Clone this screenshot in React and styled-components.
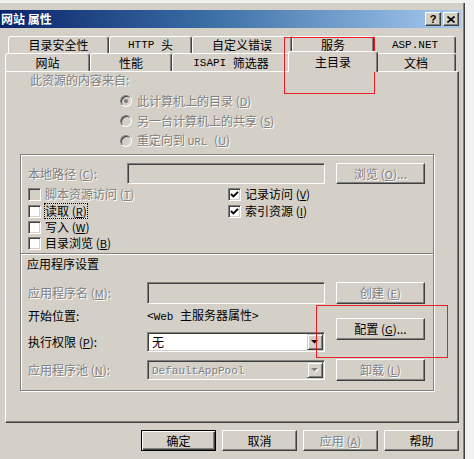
import React from 'react';
import styled, { createGlobalStyle } from 'styled-components';

const GlobalStyle = createGlobalStyle`
  html, body { margin: 0; padding: 0; background: #f1f1f1; }
  body {
    font-family: "Noto Sans CJK SC", "Noto Sans", sans-serif;
    font-size: 12px;
    color: #000;
  }
  #root { width: 474px; height: 459px; overflow: hidden; }
`;

const Page = styled.div`
  position: relative;
  box-sizing: border-box;
  width: 474px;
  height: 459px;
  padding-top: 3px;
  overflow: hidden;
  background: #f1f1f1;
`;

const Dialog = styled.div`
  box-sizing: border-box;
  width: 465px;
  height: 460px;
  background: #d4d0c8;
  border-right: 1px solid #404040;
  box-shadow: inset -1px 0 #808080;
  padding: 7px 3px 0 0;
`;

const TitleBar = styled.div`
  display: flex;
  align-items: center;
  height: 18px;
  padding-left: 1px;
  background: linear-gradient(to right, #0a246a 0%, #3a6ea5 45%, #a6caf0 100%);
  color: #fff;
  font-weight: bold;
  font-size: 12px;
  line-height: 14px;
  white-space: pre;
`;

const CaptionButtons = styled.div`
  display: flex;
  gap: 2px;
  margin-left: auto;
  padding-right: 2px;
`;

const CaptionButton = styled.div`
  box-sizing: border-box;
  width: 16px;
  height: 14px;
  background: #d4d0c8;
  border: 1px solid;
  border-color: #fff #404040 #404040 #fff;
  box-shadow: inset -1px -1px #808080;
  display: flex;
  align-items: center;
  justify-content: center;
  color: #000;
  font-family: "Liberation Sans", sans-serif;
  font-weight: bold;
  font-size: 11px;
  line-height: 10px;
`;

const Body = styled.div`
  padding: 8px 0 0 5px;
`;

const TabRow = styled.div`
  display: flex;
  height: ${p => p.$h}px;
  padding-left: ${p => p.$indent || 0}px;
`;

const Tab = styled.div`
  box-sizing: border-box;
  width: ${p => p.$w}px;
  height: 100%;
  background: #d4d0c8;
  border-top: 1px solid #fff;
  border-left: 1px solid #fff;
  border-right: 1px solid #404040;
  box-shadow: inset -1px 0 #808080;
  border-radius: 3px 3px 0 0;
  display: flex;
  align-items: center;
  justify-content: center;
  line-height: 14px;
  white-space: pre;
`;

const ActiveTab = styled(Tab)`
  position: relative;
  z-index: 1;
  width: ${p => p.$w + 4}px;
  height: 21px;
  margin: -2px -2px -1px;
  padding-bottom: 1px;
`;

const Panel = styled.div`
  box-sizing: border-box;
  width: 454px;
  height: 352px;
  border-top: 1px solid #fff;
  border-left: 1px solid #fff;
  border-right: 1px solid #404040;
  border-bottom: 1px solid #404040;
  box-shadow: inset -1px -1px #808080;
`;

const Text = styled.span`
  line-height: 14px;
  white-space: pre;
  color: ${p => (p.$disabled ? '#808080' : '#000')};
  text-shadow: ${p => (p.$disabled ? '1px 1px 0 #fff' : 'none')};
`;

const Heading = styled(Text)`
  display: block;
  margin-left: ${p => p.$indent ?? 24}px;
  line-height: 16px;
`;

const Latin = styled.span`
  font-family: "Liberation Mono", monospace;
  font-size: 11px;
  white-space: pre;
`;

const Key = styled.span`
  font-size: 11px;
  text-decoration: underline;
`;

const RadioList = styled.div`
  display: flex;
  flex-direction: column;
  margin: 3px 0 0 114px;
`;

const OptionRow = styled.div`
  display: flex;
  align-items: center;
  gap: ${p => p.$gap || 5}px;
  height: ${p => p.$h || 20}px;
`;

const RadioCircle = styled.span`
  box-sizing: border-box;
  width: 12px;
  height: 12px;
  border-radius: 50%;
  background: #d4d0c8;
  border: 1px solid;
  border-color: #808080 #fff #fff #808080;
  box-shadow: inset 1px 1px #404040;
  display: flex;
  align-items: center;
  justify-content: center;
  flex: none;
  &::after {
    content: '';
    display: ${p => (p.$checked ? 'block' : 'none')};
    width: 4px;
    height: 4px;
    border-radius: 50%;
    background: #808080;
  }
`;

const GroupBox = styled.div`
  box-sizing: border-box;
  width: 414px;
  margin: 3px 0 0 14px;
  border: 1px solid #808080;
  box-shadow: inset 1px 1px #fff, 1px 1px 0 #fff;
`;

const Section = styled.div`
  padding: ${p => p.$pad};
`;

const PathRow = styled.div`
  display: flex;
  align-items: center;
  gap: 0;
  height: 21px;
`;

const LabelCell = styled.div`
  width: ${p => p.$w}px;
  flex: none;
  display: flex;
  align-items: center;
`;

const Field = styled.div`
  box-sizing: border-box;
  width: ${p => p.$w}px;
  height: ${p => p.$h}px;
  flex: none;
  margin-right: ${p => p.$mr || 0}px;
  background: ${p => (p.$disabled ? '#d4d0c8' : '#fff')};
  border: 1px solid;
  border-color: #808080 #fff #fff #808080;
  box-shadow: inset 1px 1px #404040, inset -1px -1px #d4d0c8;
  display: flex;
  align-items: center;
  padding: 1px;
`;

const FieldText = styled.span`
  flex: 1;
  padding-left: 3px;
  line-height: 14px;
  color: ${p => (p.$disabled ? '#808080' : '#000')};
  text-shadow: ${p => (p.$disabled ? '1px 1px 0 #fff' : 'none')};
`;

const DropButton = styled.span`
  box-sizing: border-box;
  width: 16px;
  height: 100%;
  background: #d4d0c8;
  border: 1px solid;
  border-color: #d4d0c8 #404040 #404040 #d4d0c8;
  box-shadow: inset 1px 1px #fff, inset -1px -1px #808080;
  display: flex;
  align-items: center;
  justify-content: center;
`;

const Button = styled.div`
  box-sizing: border-box;
  width: ${p => p.$w}px;
  height: ${p => p.$h}px;
  flex: none;
  background: #d4d0c8;
  border: 1px solid;
  border-color: ${p => (p.$default ? '#000' : '#fff #404040 #404040 #fff')};
  box-shadow: ${p =>
    p.$default
      ? 'inset 1px 1px #fff, inset -1px -1px #404040, inset -2px -2px #808080'
      : 'inset -1px -1px #808080'};
  display: flex;
  align-items: center;
  justify-content: center;
  line-height: 14px;
  white-space: pre;
  color: ${p => (p.$disabled ? '#808080' : '#000')};
  text-shadow: ${p => (p.$disabled ? '1px 1px 0 #fff' : 'none')};
`;

const Checks = styled.div`
  display: flex;
  margin-top: 2px;
`;

const CheckColumn = styled.div`
  display: flex;
  flex-direction: column;
  width: ${p => p.$w}px;
  & > :first-child { margin-bottom: 1px; }
`;

const Box = styled.span`
  box-sizing: border-box;
  width: 13px;
  height: 13px;
  flex: none;
  background: ${p => (p.$disabled ? '#d4d0c8' : '#fff')};
  border: 1px solid;
  border-color: #808080 #fff #fff #808080;
  box-shadow: inset 1px 1px #404040, inset -1px -1px #d4d0c8;
  display: flex;
  align-items: center;
  justify-content: center;
`;

const Focus = styled.span`
  outline: 1px dotted #000;
  outline-offset: 0;
  line-height: 14px;
  white-space: pre;
`;

const Separator = styled.div`
  margin-top: 2px;
  border-top: 1px solid #808080;
  border-bottom: 1px solid #fff;
`;

const AppArea = styled.div`
  display: flex;
  margin-top: 10px;
`;

const AppGrid = styled.div`
  display: grid;
  grid-template-columns: 119px 178px;
  grid-template-rows: 22px 24px 28px 28px;
  align-items: center;
`;

const ButtonColumn = styled.div`
  display: flex;
  flex-direction: column;
  margin-left: 11px;
`;

const Spacer = styled.div`
  height: ${p => p.$h}px;
  flex: none;
`;

const DialogButtons = styled.div`
  display: flex;
  justify-content: flex-end;
  gap: 6px;
  width: 454px;
  margin-top: 7px;
`;

const Mark = styled.div`
  position: absolute;
  box-sizing: border-box;
  left: ${p => p.$x}px;
  top: ${p => p.$y}px;
  width: ${p => p.$w}px;
  height: ${p => p.$h}px;
  border: 1px solid #ee1c25;
  pointer-events: none;
`;

const CheckMark = () => (
  <svg width="9" height="9" viewBox="0 0 9 9">
    <path d="M1 4 L3.4 6.4 L8 1.8" stroke="#000" strokeWidth="1.9" fill="none" />
  </svg>
);

const Arrow = ({ disabled }) => (
  <svg width="8" height="5" viewBox="0 0 8 5">
    {disabled && <path d="M1 1 H8 L4.5 4.5 Z" fill="#fff" />}
    <path d="M0 0 H7 L3.5 3.5 Z" fill={disabled ? '#808080' : '#000'} />
  </svg>
);

const Radio = ({ checked, children }) => (
  <OptionRow>
    <RadioCircle $checked={checked} />
    <Text $disabled>{children}</Text>
  </OptionRow>
);

const Check = ({ checked, disabled, focus, children }) => (
  <OptionRow $h={16} $gap={4}>
    <Box $disabled={disabled}>{checked && <CheckMark />}</Box>
    {focus ? (
      <Focus>{children}</Focus>
    ) : (
      <Text $disabled={disabled}>{children}</Text>
    )}
  </OptionRow>
);

const backTabs = [
  { w: 101, label: '目录安全性' },
  { w: 83, label: <><Latin>HTTP </Latin>头</> },
  { w: 100, label: '自定义错误' },
  { w: 82, label: '服务' },
  { w: 82, label: <Latin>ASP.NET</Latin> },
];

const frontTabs = [
  { w: 85, label: '网站' },
  { w: 82, label: '性能' },
  { w: 118, label: <><Latin>ISAPI </Latin>筛选器</> },
  { w: 86, label: '主目录', active: true },
  { w: 80, label: '文档' },
];

export default function App() {
  return (
    <>
      <GlobalStyle />
      <Page>
        <Dialog>
          <TitleBar>
            {'网站 属性'}
            <CaptionButtons>
              <CaptionButton>?</CaptionButton>
              <CaptionButton>
                <svg width="8" height="7" viewBox="0 0 8 7">
                  <path d="M0.5 0.5 L7.5 6.5 M7.5 0.5 L0.5 6.5" stroke="#000" strokeWidth="1.6" />
                </svg>
              </CaptionButton>
            </CaptionButtons>
          </TitleBar>

          <Body>
            <TabRow $h={17} $indent={3}>
              {backTabs.map((t, i) => (
                <Tab key={i} $w={t.w}>{t.label}</Tab>
              ))}
            </TabRow>
            <TabRow $h={18}>
              {frontTabs.map((t, i) =>
                t.active ? (
                  <ActiveTab key={i} $w={t.w}>{t.label}</ActiveTab>
                ) : (
                  <Tab key={i} $w={t.w}>{t.label}</Tab>
                )
              )}
            </TabRow>

            <Panel>
              <Heading $disabled>此资源的内容来自:</Heading>
              <RadioList>
                <Radio checked>此计算机上的目录 (<Key>D</Key>)</Radio>
                <Radio>另一台计算机上的共享 (<Key>S</Key>)</Radio>
                <Radio>重定向到 <Latin>URL </Latin>(<Key>U</Key>)</Radio>
              </RadioList>

              <GroupBox>
                <Section $pad="8px 7px 0">
                  <PathRow>
                    <LabelCell $w={99}>
                      <Text $disabled>本地路径 (<Key>C</Key>):</Text>
                    </LabelCell>
                    <Field $w={198} $h={21} $mr={11} $disabled />
                    <Button $w={89} $h={21} $disabled>浏览 (<Key>O</Key>)...</Button>
                  </PathRow>

                  <Checks>
                    <CheckColumn $w={200}>
                      <Check disabled>脚本资源访问 (<Key>T</Key>)</Check>
                      <Check focus>读取 (<Key>R</Key>)</Check>
                      <Check>写入 (<Key>W</Key>)</Check>
                      <Check>目录浏览 (<Key>B</Key>)</Check>
                    </CheckColumn>
                    <CheckColumn $w={180}>
                      <Check checked>记录访问 (<Key>V</Key>)</Check>
                      <Check checked>索引资源 (<Key>I</Key>)</Check>
                    </CheckColumn>
                  </Checks>
                </Section>

                <Separator />

                <Section $pad="1px 7px 6px">
                  <Heading as="div" $indent={-1}>应用程序设置</Heading>
                  <AppArea>
                    <AppGrid>
                      <Text $disabled>应用程序名 (<Key>M</Key>):</Text>
                      <Field $w={178} $h={22} $disabled />

                      <Text>开始位置:</Text>
                      <Text>&lt;<Latin>Web </Latin>主服务器属性&gt;</Text>

                      <Text>执行权限 (<Key>P</Key>):</Text>
                      <Field $w={178} $h={20}>
                        <FieldText>无</FieldText>
                        <DropButton><Arrow /></DropButton>
                      </Field>

                      <Text $disabled>应用程序池 (<Key>N</Key>):</Text>
                      <Field $w={178} $h={20} $disabled>
                        <FieldText $disabled><Latin>DefaultAppPool</Latin></FieldText>
                        <DropButton><Arrow disabled /></DropButton>
                      </Field>
                    </AppGrid>

                    <ButtonColumn>
                      <Button $w={89} $h={22} $disabled>创建 (<Key>E</Key>)</Button>
                      <Spacer $h={14} />
                      <Button $w={89} $h={22}>配置 (<Key>G</Key>)...</Button>
                      <Spacer $h={19} />
                      <Button $w={89} $h={22} $disabled>卸载 (<Key>L</Key>)</Button>
                    </ButtonColumn>
                  </AppArea>
                </Section>
              </GroupBox>
            </Panel>

            <DialogButtons>
              <Button $w={75} $h={21} $default>确定</Button>
              <Button $w={75} $h={21}>取消</Button>
              <Button $w={75} $h={21} $disabled>应用 (<Key>A</Key>)</Button>
              <Button $w={75} $h={21}>帮助</Button>
            </DialogButtons>
          </Body>
        </Dialog>

        <Mark $x={284} $y={37} $w={91} $h={57} />
        <Mark $x={316} $y={305} $w={132} $h={53} />
      </Page>
    </>
  );
}
